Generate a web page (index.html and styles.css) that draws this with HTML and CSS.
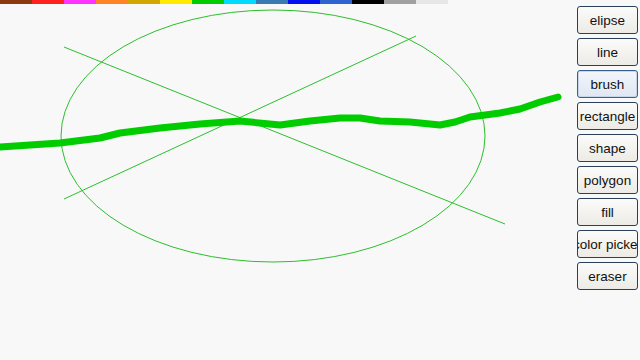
FILE: index.html
```html
<!DOCTYPE html>
<html lang="en">
<head>
    <meta charset="utf-8">
    <title>paint</title>
    <link rel="stylesheet" href="styles.css">
</head>
<body>
<div class="paint-wrapper">
    <div class="board">
        <div class="palette">
            <div class="swatch" style="background:#8b3a0e"></div>
            <div class="swatch" style="background:#ff2020"></div>
            <div class="swatch" style="background:#ff33ff"></div>
            <div class="swatch" style="background:#ff8424"></div>
            <div class="swatch" style="background:#d2a800"></div>
            <div class="swatch" style="background:#ffea00"></div>
            <div class="swatch" style="background:#00cc00"></div>
            <div class="swatch" style="background:#00dcff"></div>
            <div class="swatch" style="background:#3a7ab2"></div>
            <div class="swatch" style="background:#0010ee"></div>
            <div class="swatch" style="background:#2f63d0"></div>
            <div class="swatch" style="background:#000000"></div>
            <div class="swatch" style="background:#a0a0a0"></div>
            <div class="swatch" style="background:#e6e6e6"></div>
        </div>
        <svg class="drawing" width="640" height="360" viewBox="0 0 640 360">
            <ellipse cx="273" cy="136" rx="212" ry="126" fill="none" stroke="#2cbf2c" stroke-width="1"/>
            <line x1="64" y1="47" x2="505" y2="224" stroke="#2cbf2c" stroke-width="1"/>
            <line x1="64" y1="199" x2="416" y2="36" stroke="#2cbf2c" stroke-width="1"/>
            <polyline fill="none" stroke="#00cc00" stroke-width="7" stroke-linecap="round" stroke-linejoin="round"
                      points="0,147 30,145 60,143 100,138 120,133 160,128 200,124 240,121 280,125 310,121 340,118 360,118 380,121 410,122 440,125 455,122 470,117 500,113 520,109 540,102 558,97"/>
        </svg>
    </div>
    <div class="tools">
        <div class="tool">elipse</div>
        <div class="tool">line</div>
        <div class="tool active">brush</div>
        <div class="tool">rectangle</div>
        <div class="tool">shape</div>
        <div class="tool">polygon</div>
        <div class="tool">fill</div>
        <div class="tool">color picker</div>
        <div class="tool">eraser</div>
    </div>
</div>
</body>
</html>
```
FILE: styles.css
```css
html, body {
    margin: 0;
    height: 100%;
    background: #f8f8f8;
}

.paint-wrapper {
    position: relative;
    display: flex;
    flex-direction: row;
    width: 640px;
    height: 360px;
    overflow: hidden;
    font-family: "Liberation Sans", Arial, sans-serif;
}

.board {
    flex: 1;
}

.palette {
    display: flex;
    flex-direction: row;
}

.palette .swatch {
    width: 32px;
    height: 4px;
}

.drawing {
    position: absolute;
    left: 0;
    top: 0;
}

.tools {
    position: relative;
    display: flex;
    flex-direction: column;
    gap: 4px;
    width: 61px;
    padding-top: 6px;
    margin-right: 2px;
}

.tools .tool {
    box-sizing: border-box;
    height: 28px;
    display: flex;
    align-items: center;
    justify-content: center;
    white-space: nowrap;
    overflow: hidden;
    border: 1px solid #2a3f5a;
    border-radius: 3px;
    background: linear-gradient(#fbfbf9, #ecebe6);
    color: #111;
    font-size: 13.5px;
}

.tools .tool.active {
    border-color: #3a5f8e;
    background: linear-gradient(#f3f6fb, #dfe7f2);
    box-shadow: inset 0 0 0 1px #c5d5ea;
}
```
